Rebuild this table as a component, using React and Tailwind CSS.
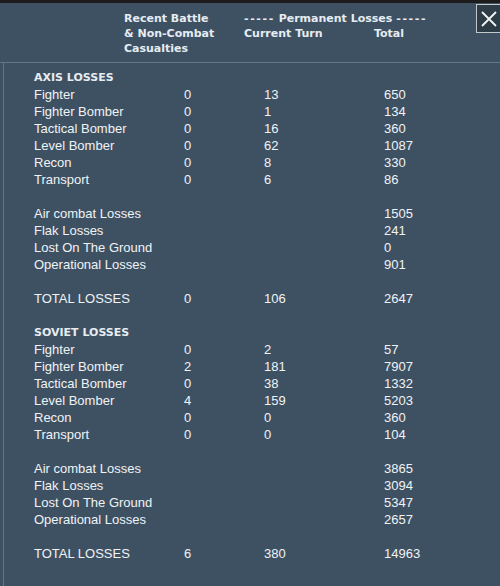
import React from "react";

const axis = {
  title: "AXIS LOSSES",
  types: [
    ["Fighter", "0", "13", "650"],
    ["Fighter Bomber", "0", "1", "134"],
    ["Tactical Bomber", "0", "16", "360"],
    ["Level Bomber", "0", "62", "1087"],
    ["Recon", "0", "8", "330"],
    ["Transport", "0", "6", "86"],
  ],
  causes: [
    ["Air combat Losses", "1505"],
    ["Flak Losses", "241"],
    ["Lost On The Ground", "0"],
    ["Operational Losses", "901"],
  ],
  total: ["0", "106", "2647"],
};

const soviet = {
  title: "SOVIET LOSSES",
  types: [
    ["Fighter", "0", "2", "57"],
    ["Fighter Bomber", "2", "181", "7907"],
    ["Tactical Bomber", "0", "38", "1332"],
    ["Level Bomber", "4", "159", "5203"],
    ["Recon", "0", "0", "360"],
    ["Transport", "0", "0", "104"],
  ],
  causes: [
    ["Air combat Losses", "3865"],
    ["Flak Losses", "3094"],
    ["Lost On The Ground", "5347"],
    ["Operational Losses", "2657"],
  ],
  total: ["6", "380", "14963"],
};

const Row = ({ cells }) => (
  <div className="grid grid-cols-[150px_80px_120px_1fr] h-[17px] leading-[17px]">
    {cells.map((c, i) => (
      <div key={i}>{c}</div>
    ))}
  </div>
);

const Blank = () => <div className="h-[17px]" />;

const Section = ({ data }) => (
  <div>
    <div className="h-[17px] leading-[17px] font-['DejaVu_Sans',sans-serif] font-bold text-[11px] text-[#e6ecf1]">
      {data.title}
    </div>
    {data.types.map((r) => (
      <Row key={r[0]} cells={r} />
    ))}
    <Blank />
    {data.causes.map((r) => (
      <Row key={r[0]} cells={[r[0], "", "", r[1]]} />
    ))}
    <Blank />
    <Row cells={["TOTAL LOSSES", ...data.total]} />
  </div>
);

const App = () => {
  return (
    <div className="w-[500px] h-[586px] overflow-hidden bg-[#3e5163] text-[#f0f3f5]">
      <div className="h-[3px] bg-[#1d1b1c]" />
      <div className="flex h-[59px] font-['DejaVu_Sans',sans-serif] font-bold text-[11px] leading-[15px] text-[#e6ecf1]">
        <div className="w-[124px]" />
        <div className="w-[120px] pt-[8px]">
          Recent Battle
          <br />& Non-Combat
          <br />
          Casualties
        </div>
        <div className="pt-[8px]">
          <div>
            <span className="tracking-[1.6px]">-----</span> Permanent Losses{" "}
            <span className="tracking-[1.6px]">-----</span>
          </div>
          <div className="flex">
            <span className="w-[130px]">Current Turn</span>
            <span>Total</span>
          </div>
        </div>
        <div className="ml-auto mt-[1px] w-[24px] h-[29px] border border-r-0 border-[#c3c8cb] bg-[#2e3c47] flex items-center justify-center">
          <svg width="16" height="16" viewBox="0 0 16 16">
            <path d="M1 1 L15 15 M15 1 L1 15" stroke="#f2f4f5" strokeWidth="1.8" fill="none" />
          </svg>
        </div>
      </div>
      <div className="border-t border-[#62778a]">
        <div className="ml-[3px] h-[600px] border-l border-[#62778a] pl-[30px] pt-[6px] font-['Liberation_Sans',Arial,sans-serif] text-[13px]">
          <Section data={axis} />
          <Blank />
          <Section data={soviet} />
        </div>
      </div>
    </div>
  );
};

export default App;
